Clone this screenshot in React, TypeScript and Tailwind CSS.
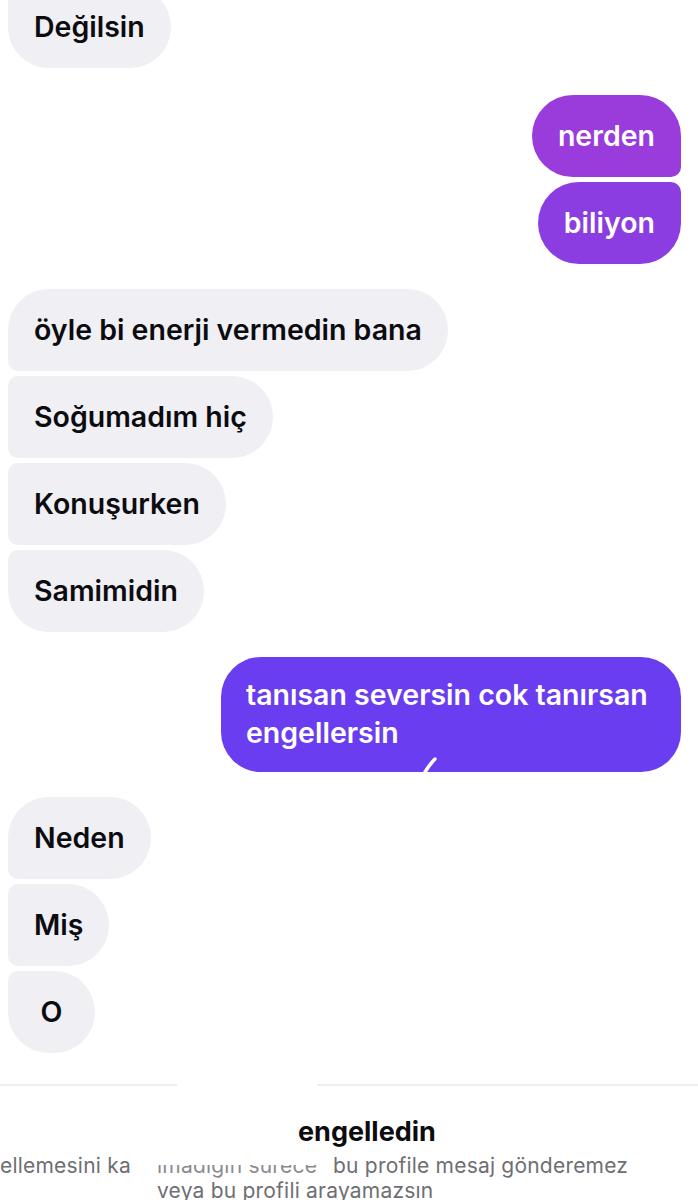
const font = { fontFamily: '"Inter", "Noto Sans", sans-serif' };

type Pos = 'first' | 'mid' | 'last' | 'single';

function leftRadius(pos: Pos) {
  if (pos === 'first') return 'rounded-[41px] rounded-bl-[10px]';
  if (pos === 'mid') return 'rounded-[41px] rounded-tl-[10px] rounded-bl-[10px]';
  if (pos === 'last') return 'rounded-[41px] rounded-tl-[10px]';
  return 'rounded-[41px]';
}

function Incoming({ text, pos }: { text: string; pos: Pos }) {
  return (
    <div className="flex">
      <div
        className={`h-[82px] min-w-[87px] flex items-center justify-center px-[26px] bg-[#efeff4] text-[#0c0c10] text-[28.5px] font-semibold ${leftRadius(pos)}`}
      >
        {text}
      </div>
    </div>
  );
}

export default function App() {
  return (
    <div className="w-[698px] h-[1200px] overflow-hidden bg-white relative" style={font}>
      <div className="pl-[8px] pr-[17px] flex flex-col">
        {/* first incoming (cut at top) */}
        <div className="-mt-[14px]">
          <Incoming text="Değilsin" pos="last" />
        </div>

        {/* outgoing pair */}
        <div className="mt-[27px] flex flex-col items-end gap-[5px]">
          <div className="h-[82px] flex items-center px-[26px] bg-[#9a3bdc] text-white text-[28.5px] font-semibold rounded-[41px] rounded-br-[10px]">
            nerden
          </div>
          <div className="h-[82px] flex items-center px-[26px] bg-[#8c3de2] text-white text-[28.5px] font-semibold rounded-[41px] rounded-tr-[10px]">
            biliyon
          </div>
        </div>

        <div className="mt-[25px] flex flex-col gap-[5px]">
          <Incoming text="öyle bi enerji vermedin bana" pos="first" />
          <Incoming text="Soğumadım hiç" pos="mid" />
          <Incoming text="Konuşurken" pos="mid" />
          <Incoming text="Samimidin" pos="last" />
        </div>

        {/* long outgoing */}
        <div className="mt-[25px] flex justify-end">
          <div className="relative w-[460px] pl-[25px] pr-[20px] pt-[19px] pb-[20px] bg-[#6a3ef0] text-white text-[28.5px] leading-[38px] font-semibold rounded-[40px]">
            tanısan seversin cok tanırsan
            <br />
            engellersin
            <svg className="absolute left-[198px] bottom-[-2px]" width="20" height="18" viewBox="0 0 20 18">
              <path d="M16 3 Q11 8 6 16" stroke="white" strokeWidth="3.5" strokeLinecap="round" fill="none" />
            </svg>
          </div>
        </div>

        <div className="mt-[25px] flex flex-col gap-[5px]">
          <Incoming text="Neden" pos="first" />
          <Incoming text="Miş" pos="mid" />
          <Incoming text="O" pos="last" />
        </div>
      </div>

      {/* footer */}
      <div className="mt-[31px] flex">
        <div className="h-[2px] w-[177px] bg-[#efefef]" />
        <div className="h-[2px] w-[140px]" />
        <div className="h-[2px] flex-1 bg-[#efefef]" />
      </div>
      <div className="mt-[30px] pl-[298px] text-[27px] leading-[32px] font-bold text-[#0c0c10]">
        engelledin
      </div>
      <div className="mt-[5px] text-[21px] leading-[25px] tracking-[0.01em] text-[#6e6e73]">
        <div className="flex items-end whitespace-nowrap">
          <span className="w-[157px]">ellemesini ka</span>
          <span className="relative w-[176px] text-[#8a8a8e]">
            ımadığın sürece
            <span className="absolute left-0 right-0 top-0 h-[12px] bg-white" />
          </span>
          <span>bu profile mesaj gönderemez</span>
        </div>
        <div className="pl-[157px] whitespace-nowrap">veya bu profili arayamazsın</div>
      </div>
    </div>
  );
}
